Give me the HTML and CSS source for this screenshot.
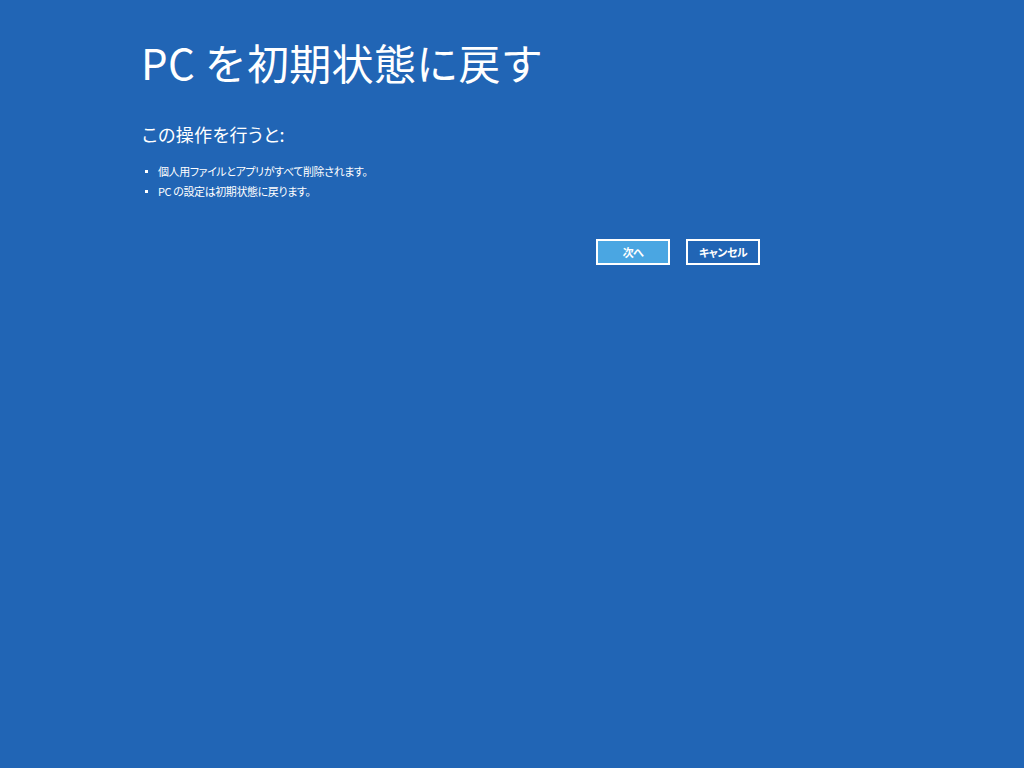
FILE: index.html
```html
<!DOCTYPE html>
<html lang="ja">
<head>
<meta charset="utf-8">
<link rel="stylesheet" href="styles.css">
</head>
<body>
<main class="page">
  <h1 class="title">PC を初期状態に戻す</h1>
  <h2 class="subtitle">この操作を行うと:</h2>
  <ul class="list">
    <li>個人用ファイルとアプリがすべて削除されます。</li>
    <li>PC の設定は初期状態に戻ります。</li>
  </ul>
  <div class="actions">
    <button class="btn btn-primary">次へ</button>
    <button class="btn">キャンセル</button>
  </div>
</main>
</body>
</html>
```

FILE: styles.css
```css
html, body {
  margin: 0;
  padding: 0;
  height: 100%;
  background: #2165b5;
}
body {
  font-family: "Noto Sans CJK JP", "Noto Sans", sans-serif;
  color: #ffffff;
}
.page {
  padding: 32px 0 0 141px;
  width: 619px;
}
.title {
  margin: 0;
  font-size: 42px;
  font-weight: 400;
  line-height: 60px;
  letter-spacing: 0.3px;
}
.subtitle {
  margin: 30px 0 0 1px;
  font-size: 18px;
  font-weight: 400;
  line-height: 24px;
  font-feature-settings: "palt";
  letter-spacing: 0.4px;
}
.list {
  margin: 15px 0 0 0;
  padding: 0;
  list-style: none;
  font-size: 11px;
  line-height: 20px;
  font-feature-settings: "palt";
  letter-spacing: -0.4px;
}
.list li {
  display: flex;
  align-items: center;
  padding-left: 4px;
}
.list li::before {
  content: "";
  width: 3px;
  height: 3px;
  background: #ffffff;
  margin-right: 10px;
  flex: none;
}
.actions {
  display: flex;
  justify-content: flex-end;
  gap: 16px;
  margin-top: 38px;
}
.btn {
  width: 74px;
  height: 26px;
  box-sizing: border-box;
  border: 2px solid #ffffff;
  background: #2165b5;
  color: #ffffff;
  font-family: "Noto Sans CJK JP", sans-serif;
  font-size: 11px;
  font-weight: 700;
  padding: 0;
  line-height: 20px;
  font-feature-settings: "palt";
  letter-spacing: -0.5px;
}
.btn-primary {
  background: #4aa6e2;
}
```
